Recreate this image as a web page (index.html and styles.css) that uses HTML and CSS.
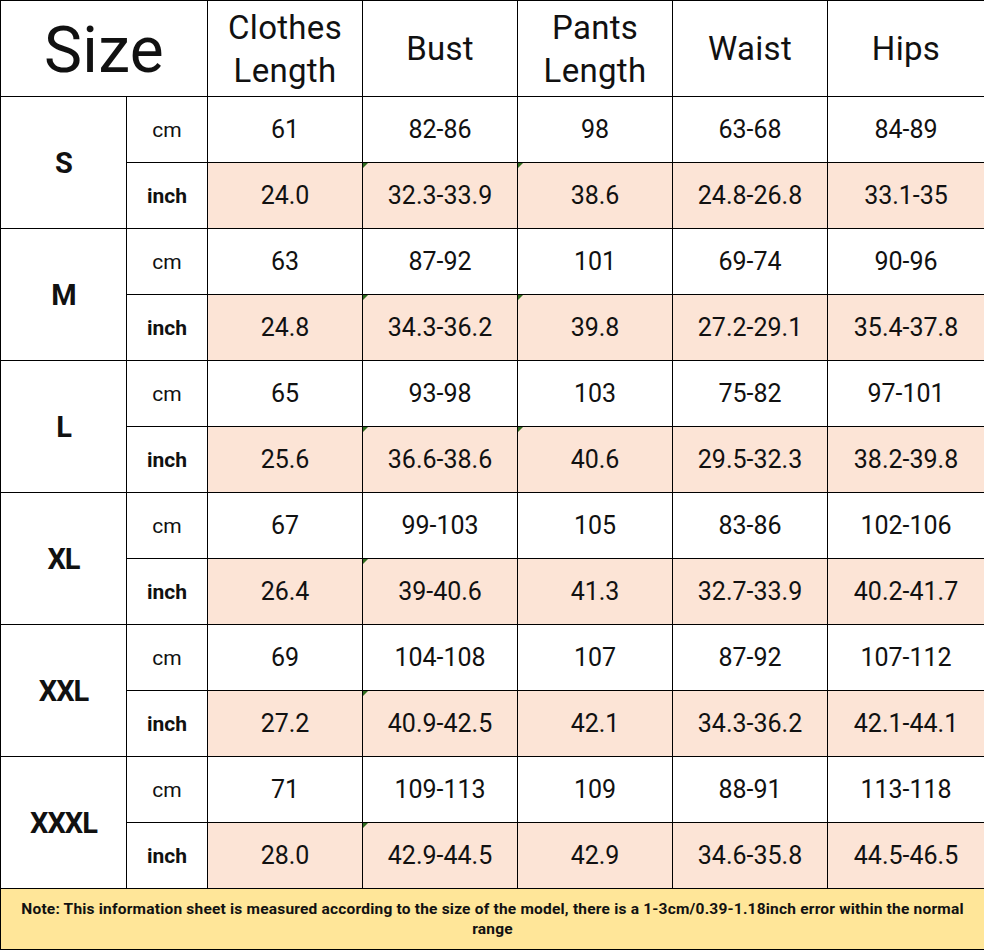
FILE: index.html
```html
<!DOCTYPE html>
<html lang="en">
<head>
<meta charset="utf-8">
<title>Size Chart</title>
<link rel="stylesheet" href="styles.css">
</head>
<body>
<table class="chart">
  <colgroup>
    <col class="c-size"><col class="c-unit"><col class="c-val"><col class="c-val"><col class="c-val"><col class="c-val"><col class="c-last">
  </colgroup>
  <thead>
    <tr class="head">
      <th colspan="2" class="size-head">Size</th>
      <th>Clothes<br>Length</th>
      <th>Bust</th>
      <th>Pants<br>Length</th>
      <th>Waist</th>
      <th>Hips</th>
    </tr>
  </thead>
  <tbody>
    <tr class="cm"><th rowspan="2" class="size">S</th><td class="unit">cm</td><td>61</td><td>82-86</td><td>98</td><td>63-68</td><td>84-89</td></tr>
    <tr class="inch"><td class="unit">inch</td><td>24.0</td><td class="tick">32.3-33.9</td><td class="tick">38.6</td><td>24.8-26.8</td><td>33.1-35</td></tr>
    <tr class="cm"><th rowspan="2" class="size">M</th><td class="unit">cm</td><td>63</td><td>87-92</td><td>101</td><td>69-74</td><td>90-96</td></tr>
    <tr class="inch"><td class="unit">inch</td><td>24.8</td><td class="tick">34.3-36.2</td><td class="tick">39.8</td><td>27.2-29.1</td><td>35.4-37.8</td></tr>
    <tr class="cm"><th rowspan="2" class="size">L</th><td class="unit">cm</td><td>65</td><td>93-98</td><td>103</td><td>75-82</td><td>97-101</td></tr>
    <tr class="inch"><td class="unit">inch</td><td>25.6</td><td class="tick">36.6-38.6</td><td class="tick">40.6</td><td>29.5-32.3</td><td>38.2-39.8</td></tr>
    <tr class="cm"><th rowspan="2" class="size">XL</th><td class="unit">cm</td><td>67</td><td>99-103</td><td>105</td><td>83-86</td><td>102-106</td></tr>
    <tr class="inch"><td class="unit">inch</td><td>26.4</td><td class="tick">39-40.6</td><td>41.3</td><td>32.7-33.9</td><td>40.2-41.7</td></tr>
    <tr class="cm"><th rowspan="2" class="size">XXL</th><td class="unit">cm</td><td>69</td><td>104-108</td><td>107</td><td>87-92</td><td>107-112</td></tr>
    <tr class="inch"><td class="unit">inch</td><td>27.2</td><td class="tick">40.9-42.5</td><td>42.1</td><td>34.3-36.2</td><td>42.1-44.1</td></tr>
    <tr class="cm"><th rowspan="2" class="size">XXXL</th><td class="unit">cm</td><td>71</td><td>109-113</td><td>109</td><td>88-91</td><td>113-118</td></tr>
    <tr class="inch"><td class="unit">inch</td><td>28.0</td><td class="tick">42.9-44.5</td><td>42.9</td><td>34.6-35.8</td><td>44.5-46.5</td></tr>
  </tbody>
  <tfoot>
    <tr class="note-row">
      <td colspan="7" class="note">Note: This information sheet is measured according to the size of the model, there is a 1-3cm/0.39-1.18inch error within the normal range</td>
    </tr>
  </tfoot>
</table>
</body>
</html>
```

FILE: styles.css
```css
html, body {
  margin: 0;
  padding: 0;
  background: #ffffff;
}

body {
  font-family: Roboto, "Liberation Sans", sans-serif;
  color: #111111;
}

.chart {
  width: 984px;
  border-collapse: collapse;
  table-layout: fixed;
}

.c-size { width: 126px; }
.c-unit { width: 81px; }
.c-val { width: 155px; }
.c-last { width: 157px; }

.chart th,
.chart td {
  border: 1px solid #000000;
  padding: 0;
  text-align: center;
  vertical-align: middle;
}

.head {
  height: 96px;
}

.head th {
  font-weight: 400;
  font-size: 33px;
  line-height: 43px;
  letter-spacing: 0.3px;
}

.head .size-head {
  font-size: 64px;
  line-height: 64px;
  padding-top: 4px;
}

.cm,
.inch {
  height: 66px;
}

.chart td {
  font-size: 25px;
  font-weight: 400;
}

.size {
  font-size: 29px;
  font-weight: 700;
  letter-spacing: -1px;
}

.chart td.unit {
  font-size: 21px;
  background: #ffffff;
}

.inch td {
  background: #fce4d6;
}

.inch td.unit {
  font-weight: 700;
}

.tick {
  position: relative;
}

.tick::before {
  content: "";
  position: absolute;
  top: 0;
  left: 0;
  border-top: 5px solid #2f6b1f;
  border-right: 5px solid transparent;
}

.note-row {
  height: 61px;
}

.chart td.note {
  background: #ffe699;
  font-size: 15.5px;
  font-weight: 700;
  line-height: 20px;
  letter-spacing: 0.2px;
  padding: 0 20px;
}
```
